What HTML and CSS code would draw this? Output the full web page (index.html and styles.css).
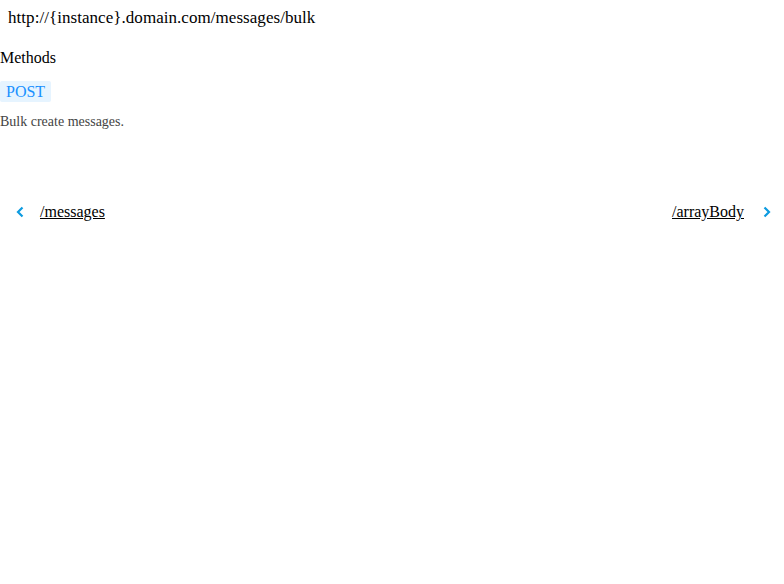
FILE: index.html
```html
<!DOCTYPE html>
<html>
<head>
<meta charset="utf-8">
<link rel="stylesheet" href="styles.css">
</head>
<body>
<div class="url">http://{instance}.domain.com/messages/bulk</div>
<div class="methods-title">Methods</div>
<div class="methods"><span class="badge">POST</span></div>
<p class="desc">Bulk create messages.</p>
<nav class="pager">
  <a class="prev" href="#"><svg class="chev" width="10" height="12" viewBox="0 0 10 12"><path d="M7.5 1.5 L3 6 L7.5 10.5" fill="none" stroke="#0d9be0" stroke-width="2.2"/></svg><span class="link">/messages</span></a>
  <a class="next" href="#"><span class="link">/arrayBody</span><svg class="chev" width="10" height="12" viewBox="0 0 10 12"><path d="M2.5 1.5 L7 6 L2.5 10.5" fill="none" stroke="#0d9be0" stroke-width="2.2"/></svg></a>
</nav>
</body>
</html>
```
FILE: styles.css
```css
html, body { margin: 0; padding: 0; background: #fff; }
body { font-family: "Liberation Serif", "Times New Roman", serif; color: #000; }
.url { font-size: 17px; padding: 8px 8px 0; line-height: 20px; letter-spacing: 0.05px; }
.methods-title { font-size: 16px; margin-top: 21px; line-height: 18px; }
.methods { margin-top: 14px; }
.badge { display: inline-block; background: #e6f4ff; color: #1890ff; font-size: 16px; line-height: 21px; padding: 0 6px; border-radius: 2px; }
.desc { font-size: 14px; color: #444; margin: 11px 0 0; line-height: 18px; }
.pager { display: flex; justify-content: space-between; margin-top: 72px; padding: 0 12px 0 15px; }
.pager a { display: flex; align-items: center; color: #000; text-decoration: none; font-size: 16px; gap: 15px; }
.pager .next { gap: 18px; }
.pager .link { text-decoration: underline; }
```
